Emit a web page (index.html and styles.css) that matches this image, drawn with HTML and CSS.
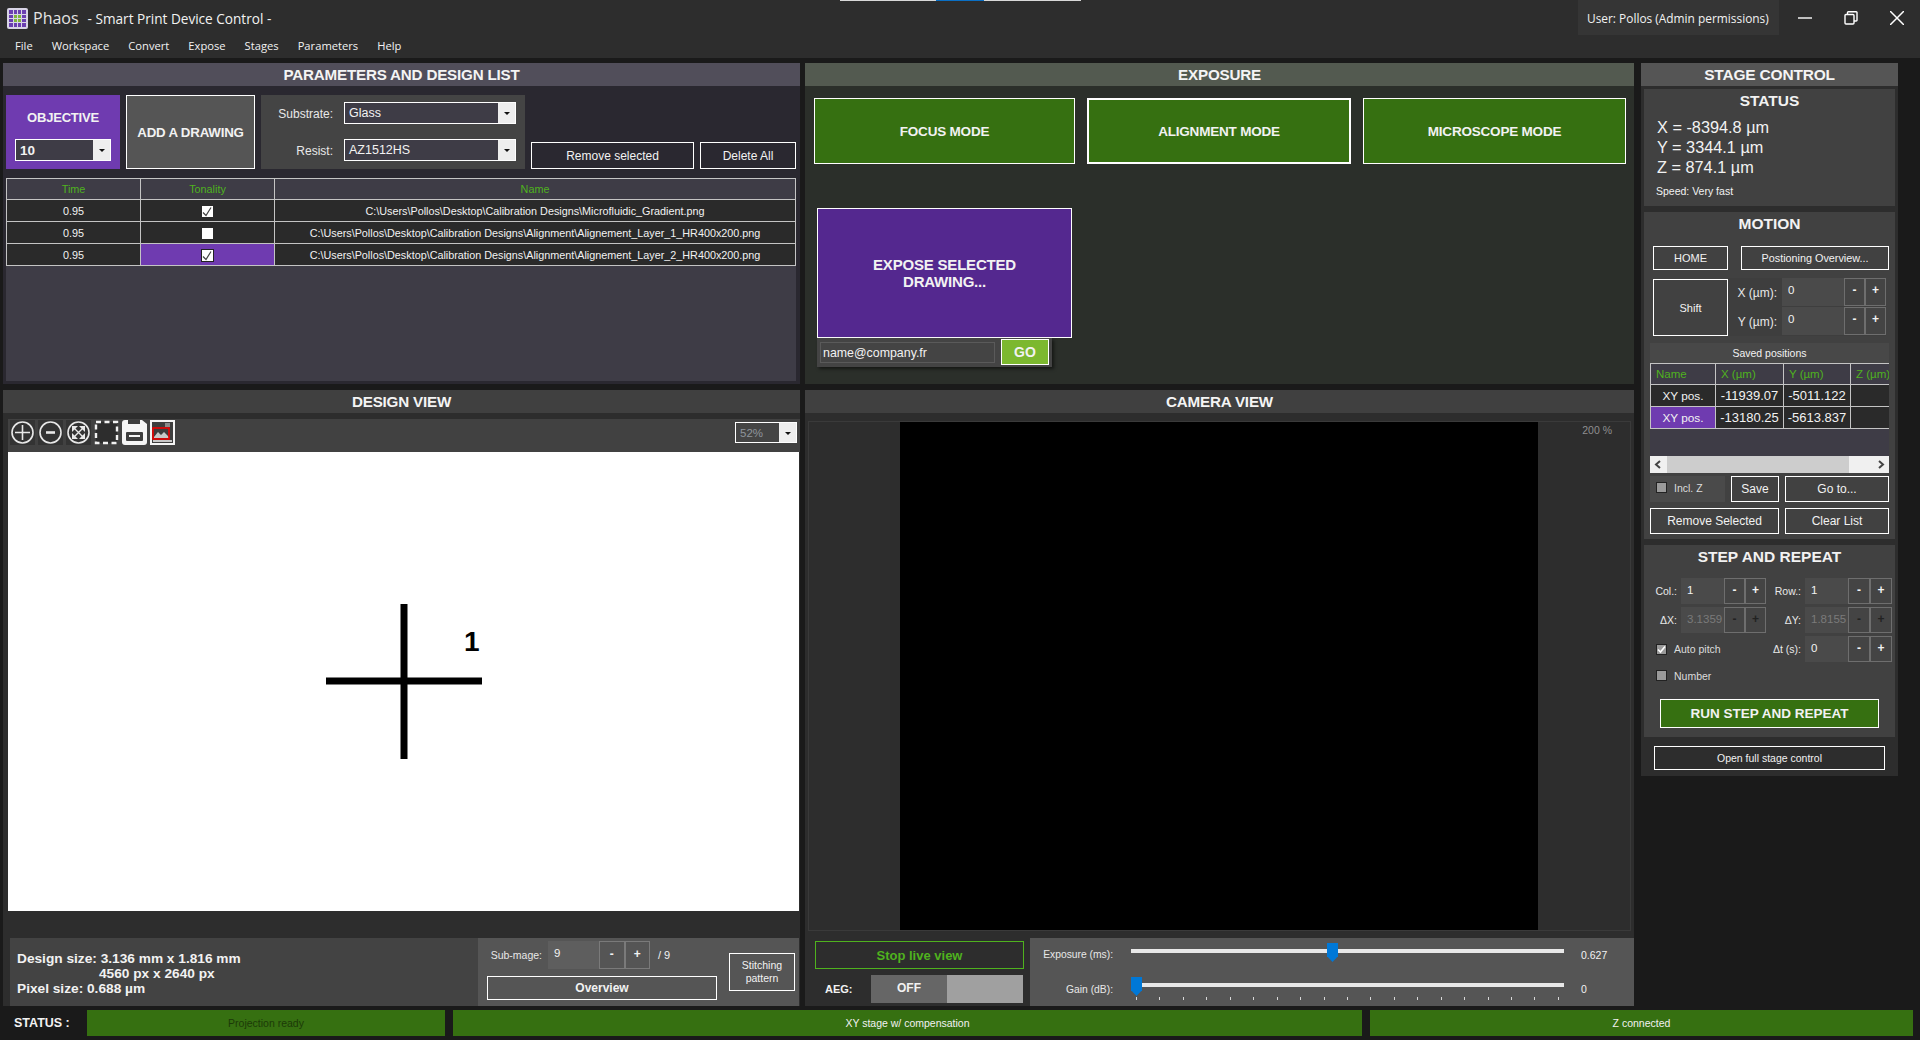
FILE: index.html
```html
<!DOCTYPE html>
<html lang="en">
<head>
    <meta charset="UTF-8">
    <title>Phaos - Smart Print Device Control</title>
    <link rel="stylesheet" href="styles.css">
</head>
<body>

<header class="titlebar">
    <div class="snap-hint"><span class="snap-hint-on"></span></div>
    <div class="title-left">
        <div class="title-row">
            <svg class="logo" width="21" height="21" viewBox="0 0 21 21">
                <rect width="21" height="21" rx="2" fill="#d8d4e6"/>
                <g fill="#6a3fb0">
                    <rect x="2" y="2" width="4" height="4"/><rect x="7" y="2" width="3" height="4"/><rect x="11" y="2" width="3" height="4"/><rect x="15" y="2" width="4" height="4"/>
                    <rect x="2" y="7" width="4" height="3"/><rect x="15" y="7" width="4" height="3"/>
                    <rect x="2" y="11" width="4" height="3"/><rect x="15" y="11" width="4" height="3"/>
                    <rect x="2" y="15" width="4" height="4"/><rect x="7" y="15" width="3" height="4"/><rect x="11" y="15" width="3" height="4"/><rect x="15" y="15" width="4" height="4"/>
                </g>
                <g fill="#7fb53a">
                    <rect x="7" y="7" width="3" height="3"/><rect x="11" y="7" width="3" height="3"/><rect x="7" y="11" width="3" height="3"/><rect x="11" y="11" width="3" height="3"/>
                </g>
            </svg>
            <span class="app-name">Phaos</span>
            <span class="app-sub">- Smart Print Device Control -</span>
        </div>
        <nav class="menu">
            <span>File</span><span>Workspace</span><span>Convert</span><span>Expose</span><span>Stages</span><span>Parameters</span><span>Help</span>
        </nav>
    </div>
    <div class="user-badge">User: Pollos (Admin permissions)</div>
    <div class="win-btns">
        <svg width="14" height="14" viewBox="0 0 14 14"><path d="M0 7h14" stroke="#fff" stroke-width="1.4"/></svg>
        <svg width="14" height="14" viewBox="0 0 14 14" fill="none" stroke="#fff" stroke-width="1.4"><rect x="1" y="3.5" width="9" height="9.5" rx="1"/><path d="M3.5 3.5V1.5a.8.8 0 0 1 .8-.8h7.9a.8.8 0 0 1 .8.8v7.7a.8.8 0 0 1-.8.8H10"/></svg>
        <svg width="14" height="14" viewBox="0 0 14 14"><path d="M0 0l14 14M14 0L0 14" stroke="#fff" stroke-width="1.5"/></svg>
    </div>
</header>

<main class="workspace">

    <section class="panel params">
        <h2 class="panel-head params-head">PARAMETERS AND DESIGN LIST</h2>
        <div class="params-top">
            <div class="objective">
                <span class="objective-label">OBJECTIVE</span>
                <div class="combo objective-combo"><span class="combo-text strong">10</span><span class="combo-arrow"></span></div>
            </div>
            <button class="btn add-drawing">ADD A DRAWING</button>
            <div class="substrate">
                <div class="substrate-row">
                    <label>Substrate:</label>
                    <div class="combo"><span class="combo-text">Glass</span><span class="combo-arrow"></span></div>
                </div>
                <div class="substrate-row">
                    <label>Resist:</label>
                    <div class="combo"><span class="combo-text">AZ1512HS</span><span class="combo-arrow"></span></div>
                </div>
            </div>
            <button class="btn remove-selected">Remove selected</button>
            <button class="btn delete-all">Delete All</button>
        </div>
        <div class="list-area">
            <table class="grid design-list">
                <colgroup><col class="c-time"><col class="c-tone"><col></colgroup>
                <thead><tr><th>Time</th><th>Tonality</th><th>Name</th></tr></thead>
                <tbody>
                    <tr>
                        <td>0.95</td>
                        <td><span class="tick on"><svg width="12" height="12" viewBox="0 0 12 12"><path d="M2 6.5l3 3 5-8" fill="none" stroke="#444" stroke-width="1.2"/></svg></span></td>
                        <td>C:\Users\Pollos\Desktop\Calibration Designs\Microfluidic_Gradient.png</td>
                    </tr>
                    <tr>
                        <td>0.95</td>
                        <td><span class="tick"></span></td>
                        <td>C:\Users\Pollos\Desktop\Calibration Designs\Alignment\Alignement_Layer_1_HR400x200.png</td>
                    </tr>
                    <tr>
                        <td>0.95</td>
                        <td class="picked"><span class="tick on edged"><svg width="12" height="12" viewBox="0 0 12 12"><path d="M2 6.5l3 3 5-8" fill="none" stroke="#444" stroke-width="1.2"/></svg></span></td>
                        <td>C:\Users\Pollos\Desktop\Calibration Designs\Alignment\Alignement_Layer_2_HR400x200.png</td>
                    </tr>
                </tbody>
            </table>
        </div>
    </section>

    <section class="panel exposure">
        <h2 class="panel-head exposure-head">EXPOSURE</h2>
        <div class="modes">
            <button class="btn mode mode-focus">FOCUS MODE</button>
            <button class="btn mode mode-align">ALIGNMENT MODE</button>
            <button class="btn mode mode-micro">MICROSCOPE MODE</button>
        </div>
        <button class="btn expose-btn">EXPOSE SELECTED<br>DRAWING...</button>
        <div class="mail-strip">
            <span class="mail-input">name@company.fr</span>
            <button class="btn go-btn">GO</button>
        </div>
    </section>

    <aside class="panel stage">
        <h2 class="panel-head stage-head">STAGE CONTROL</h2>

        <div class="sub status-sub">
            <h3 class="sub-title">STATUS</h3>
            <div class="coords">
                <div>X = -8394.8 µm</div>
                <div>Y = 3344.1 µm</div>
                <div>Z = 874.1 µm</div>
            </div>
            <div class="speed">Speed: Very fast</div>
        </div>

        <div class="sub motion-sub">
            <h3 class="sub-title">MOTION</h3>
            <div class="motion-row">
                <button class="btn home-btn">HOME</button>
                <button class="btn overview-btn">Postioning Overview...</button>
            </div>
            <div class="shift-row">
                <button class="btn shift-btn">Shift</button>
                <div class="shift-fields">
                    <div class="shift-line">
                        <label>X (µm):</label>
                        <div class="stepper wide"><span class="stepper-val">0</span><span class="step">-</span><span class="step">+</span></div>
                    </div>
                    <div class="shift-line">
                        <label>Y (µm):</label>
                        <div class="stepper wide"><span class="stepper-val">0</span><span class="step">-</span><span class="step">+</span></div>
                    </div>
                </div>
            </div>
            <div class="saved">
                <div class="saved-title">Saved positions</div>
                <div class="saved-list">
                    <table class="grid saved-table">
                        <colgroup><col class="s-name"><col class="s-x"><col class="s-y"><col class="s-z"></colgroup>
                        <thead><tr><th class="left">Name</th><th class="left">X (µm)</th><th class="left">Y (µm)</th><th class="left">Z (µm)</th></tr></thead>
                        <tbody>
                            <tr><td class="pos-name">XY pos.</td><td>-11939.07</td><td>-5011.122</td><td></td></tr>
                            <tr><td class="pos-name picked">XY pos.</td><td>-13180.25</td><td>-5613.837</td><td></td></tr>
                        </tbody>
                    </table>
                </div>
                <div class="hscroll">
                    <svg width="17" height="17" viewBox="0 0 17 17"><path d="M10 5l-4 3.5 4 3.5" fill="none" stroke="#444" stroke-width="2"/></svg>
                    <span class="hscroll-track"><span class="hscroll-thumb"></span></span>
                    <svg width="17" height="17" viewBox="0 0 17 17"><path d="M7 5l4 3.5-4 3.5" fill="none" stroke="#444" stroke-width="2"/></svg>
                </div>
                <div class="saved-actions">
                    <div class="incl-z"><span class="check"></span><span>Incl. Z</span></div>
                    <button class="btn save-btn">Save</button>
                    <button class="btn goto-btn">Go to...</button>
                </div>
                <div class="saved-actions second">
                    <button class="btn remove-sel-btn">Remove Selected</button>
                    <button class="btn goto-btn">Clear List</button>
                </div>
            </div>
        </div>

        <div class="sub repeat-sub">
            <h3 class="sub-title">STEP AND REPEAT</h3>
            <div class="repeat-grid">
                <label>Col.:</label>
                <div class="stepper"><span class="stepper-val">1</span><span class="step">-</span><span class="step">+</span></div>
                <label>Row.:</label>
                <div class="stepper big"><span class="stepper-val">1</span><span class="step">-</span><span class="step">+</span></div>

                <label>ΔX:</label>
                <div class="stepper off"><span class="stepper-val">3.1359</span><span class="step">-</span><span class="step">+</span></div>
                <label>ΔY:</label>
                <div class="stepper big off"><span class="stepper-val">1.8155</span><span class="step">-</span><span class="step">+</span></div>

                <div class="check-cell"><span class="check checked"><svg width="9" height="9" viewBox="0 0 9 9"><path d="M1 4.500l2.500 2.500L8 1.500" fill="none" stroke="#fff" stroke-width="1.6"/></svg></span><span>Auto pitch</span></div>
                <label>Δt (s):</label>
                <div class="stepper big"><span class="stepper-val">0</span><span class="step">-</span><span class="step">+</span></div>

                <div class="check-cell number-cell"><span class="check"></span><span>Number</span></div>
            </div>
            <button class="btn run-btn">RUN STEP AND REPEAT</button>
        </div>

        <button class="btn full-stage">Open full stage control</button>
    </aside>

    <section class="panel design">
        <h2 class="panel-head">DESIGN VIEW</h2>
        <div class="toolbar">
            <svg class="tool" width="25" height="25" viewBox="0 0 25 25"><rect width="25" height="25" fill="#333"/><g fill="none" stroke="#e8e8e8" stroke-width="1.600"><circle cx="12.500" cy="12.500" r="10.500"/><path d="M12.500 5v15M5 12.500h15"/></g></svg>
            <svg class="tool" width="25" height="25" viewBox="0 0 25 25"><rect width="25" height="25" fill="#333"/><g fill="none" stroke="#e8e8e8"><circle cx="12.500" cy="12.500" r="10.500" stroke-width="1.600"/><path d="M8 12.500h9" stroke-width="2.600"/></g></svg>
            <svg class="tool" width="25" height="25" viewBox="0 0 25 25"><rect width="25" height="25" fill="#333"/><circle cx="12.500" cy="12.500" r="10.500" fill="none" stroke="#e8e8e8" stroke-width="1.600"/><g fill="#e8e8e8"><path d="M6 6h6l-6 6z"/><path d="M19 6v6l-6-6z"/><path d="M19 19h-6l6-6z"/><path d="M6 19v-6l6 6z"/></g><path d="M8 8l9 9M17 8l-9 9" stroke="#e8e8e8" stroke-width="1.400"/></svg>
            <svg class="tool" width="25" height="25" viewBox="0 0 25 25"><rect x="2" y="2" width="21" height="21" fill="#2d2d2d" stroke="#f2f2f2" stroke-width="2.400" stroke-dasharray="5 3.500"/></svg>
            <svg class="tool" width="25" height="25" viewBox="0 0 25 25"><path d="M0 3a3 3 0 0 1 3-3h17l5 4v18a3 3 0 0 1-3 3H3a3 3 0 0 1-3-3z" fill="#f5f5f5"/><rect x="6" y="0" width="12" height="4" fill="#3d3d3d"/><rect x="4" y="12" width="17" height="9" rx="1" fill="#3d3d3d"/><rect x="7" y="15" width="11" height="2" fill="#f5f5f5"/></svg>
            <svg class="tool" width="25" height="25" viewBox="0 0 25 25"><rect width="25" height="25" fill="#f5f5f5"/><rect x="2" y="2" width="21" height="21" fill="#3e3e3e"/><path d="M4 17l4-5 3 3 3-3 5 5v1H4z" fill="#c8c8c8"/><path d="M3 21h19" stroke="#c8c8c8" stroke-width="2"/><path d="M15 3h5v4h-5z" fill="#8a8a8a"/><rect x="3" y="8" width="16" height="11" fill="none" stroke="#f00000" stroke-width="1.600"/></svg>
            <div class="combo zoom-combo"><span class="combo-text dim">52%</span><span class="combo-arrow"></span></div>
        </div>
        <div class="canvas">
            <svg width="791" height="459" viewBox="0 0 791 459">
                <path d="M396 152v155M318 229h156" stroke="#000" stroke-width="7" fill="none"/>
                <text class="canvas-num" x="456" y="199">1</text>
            </svg>
        </div>
        <div class="design-foot">
            <div class="size-info">
                <div>Design size: 3.136 mm x 1.816 mm</div>
                <div class="size-indent">4560 px x 2640 px</div>
                <div>Pixel size: 0.688 µm</div>
            </div>
            <div class="subimage">
                <div class="subimage-main">
                    <div class="subimage-row">
                        <label>Sub-mage:</label>
                        <div class="stepper sub-step"><span class="stepper-val">9</span><span class="step">-</span><span class="step">+</span></div>
                        <span class="of-total">/ 9</span>
                    </div>
                    <button class="btn overview">Overview</button>
                </div>
                <button class="btn stitching">Stitching pattern</button>
            </div>
        </div>
    </section>

    <section class="panel camera">
        <h2 class="panel-head">CAMERA VIEW</h2>
        <div class="camera-frame">
            <div class="camera-black"></div>
            <div class="camera-zoom">200 %</div>
        </div>
        <div class="camera-foot">
            <div class="live-col">
                <button class="btn stop-live">Stop live view</button>
                <div class="aeg-row">
                    <span class="aeg-label">AEG:</span>
                    <div class="toggle"><span class="toggle-off">OFF</span><span class="toggle-rest"></span></div>
                </div>
            </div>
            <div class="sliders">
                <div class="slider-row">
                    <label>Exposure (ms):</label>
                    <div class="slider">
                        <div class="track"><span class="thumb" style="left: 196px"></span></div>
                    </div>
                    <span class="slider-val">0.627</span>
                </div>
                <div class="slider-row gain-row">
                    <label>Gain (dB):</label>
                    <div class="slider">
                        <div class="track"><span class="thumb" style="left: 0"></span></div>
                        <div class="ticks">
                            <i></i><i></i><i></i><i></i><i></i><i></i><i></i><i></i><i></i><i></i><i></i><i></i><i></i><i></i><i></i><i></i><i></i><i></i><i></i>
                        </div>
                    </div>
                    <span class="slider-val">0</span>
                </div>
            </div>
        </div>
    </section>
</main>

<footer class="statusbar">
    <span class="status-label">STATUS :</span>
    <div class="status-cell cell-proj">Projection ready</div>
    <div class="status-cell cell-xy">XY stage w/ compensation</div>
    <div class="status-cell cell-z">Z connected</div>
</footer>

</body>
</html>
```

FILE: styles.css
```css
* {
    box-sizing: border-box;
}

html, body {
    margin: 0;
    height: 1040px;
    overflow: hidden;
}

body {
    background-color: #1a1a1a;
    color: #f2f2f2;
    font-family: "Liberation Sans", Arial, sans-serif;
    font-size: 11px;
}

h2, h3 {
    margin: 0;
}

label {
    color: #e8e8e8;
}

.btn {
    display: block;
    padding: 0;
    background: transparent;
    border: 1px solid #fff;
    color: #f2f2f2;
    font-family: inherit;
    font-size: 11px;
}

/* title bar */
.titlebar {
    position: relative;
    display: flex;
    height: 58px;
    background-color: #2d2d2d;
}

.snap-hint {
    position: absolute;
    top: 0;
    left: 840px;
    width: 241px;
    height: 1px;
    background-color: #d8d8d8;
}

.snap-hint-on {
    position: absolute;
    left: 96px;
    width: 48px;
    height: 1px;
    background-color: #0a6fc4;
}

.title-left {
    width: 1578px;
    padding-left: 7px;
}

.title-row {
    display: flex;
    align-items: center;
    height: 36px;
    font-family: "Open Sans", sans-serif;
}

.app-name {
    margin-left: 5px;
    font-size: 16px;
    color: #e4e4e4;
}

.app-sub {
    margin-left: 9px;
    font-size: 13.600px;
}

.menu {
    display: flex;
    gap: 19px;
    padding-left: 8px;
    font-family: "Open Sans", sans-serif;
    font-size: 11.200px;
    line-height: 20px;
}

.user-badge {
    width: 201px;
    height: 35px;
    padding-left: 9px;
    background-color: #353535;
    font-family: "Open Sans", sans-serif;
    font-size: 11.900px;
    line-height: 36px;
    white-space: nowrap;
}

.win-btns {
    display: flex;
    gap: 32px;
    padding: 11px 0 0 19px;
    height: 35px;
}

/* main grid */
.workspace {
    display: grid;
    grid-template-columns: 797px 829px 257px;
    grid-template-rows: 321px 616px;
    column-gap: 5px;
    row-gap: 6px;
    margin: 5px 0 0 3px;
}

.workspace .stage {
    grid-column: 3;
    grid-row: 1 / 3;
    margin-left: 2px;
    width: 257px;
    height: 713px;
}

.panel {
    background-color: #2d2d2d;
}

.panel-head {
    height: 23px;
    background-color: #404040;
    color: #f4f4f4;
    font-size: 15.200px;
    font-weight: bold;
    letter-spacing: -0.2px;
    line-height: 24px;
    text-align: center;
}

/* parameters */
.params {
    background-color: #2a2830;
}

.params-head {
    background-color: #514e5a;
}

.params-top {
    display: flex;
    align-items: flex-end;
    height: 74px;
    margin: 9px 0 0 3px;
}

.objective {
    width: 114px;
    height: 74px;
    padding: 15px 9px 0;
    background-color: #6f3bb0;
}

.objective-label {
    display: block;
    font-size: 13px;
    font-weight: bold;
    letter-spacing: -0.2px;
    line-height: 16px;
    text-align: center;
}

.combo {
    display: flex;
    width: 172px;
    height: 22px;
    border: 1px solid #fff;
    background-color: #3e3c46;
}

.combo-text {
    flex: 1;
    padding-left: 4px;
    font-size: 12.500px;
    line-height: 21px;
}

.combo-text.strong {
    font-size: 13.500px;
    font-weight: bold;
}

.combo-text.dim {
    color: #8f959c;
    font-size: 11.500px;
}

.combo-arrow {
    position: relative;
    width: 17px;
    background-color: #eeeeee;
}

.combo-arrow::after {
    content: "";
    position: absolute;
    left: 6px;
    top: 9px;
    border: 3px solid transparent;
    border-top: 3px solid #111;
    border-bottom: 0;
}

.objective-combo {
    width: 96px;
    margin-top: 13px;
}

.add-drawing {
    width: 129px;
    height: 74px;
    margin-left: 6px;
    background-color: #555;
    font-size: 13.300px;
    font-weight: bold;
    letter-spacing: -0.2px;
}

.substrate {
    width: 264px;
    height: 74px;
    margin-left: 6px;
    padding-top: 7px;
    background-color: #444;
}

.substrate-row {
    display: flex;
    align-items: center;
    height: 22px;
    margin-bottom: 15px;
}

.substrate-row label {
    width: 72px;
    padding-top: 2px;
    font-size: 12px;
    text-align: right;
}

.substrate-row .combo {
    margin-left: 11px;
}

.remove-selected {
    width: 163px;
    height: 27px;
    margin-left: 6px;
    font-size: 12px;
}

.delete-all {
    width: 96px;
    height: 27px;
    margin-left: 6px;
    font-size: 12px;
}

.list-area {
    height: 203px;
    margin: 9px 4px 0 3px;
    background-color: #3e3c46;
}

.grid {
    border-collapse: collapse;
    table-layout: fixed;
    width: 100%;
    font-size: 10.800px;
}

.grid th, .grid td {
    padding: 0;
    border: 1px solid #c4c4c4;
    overflow: hidden;
    white-space: nowrap;
    text-align: center;
}

.grid th {
    height: 21px;
    background-color: #3e3c46;
    color: #4fb21e;
    font-weight: normal;
}

.grid td {
    height: 22px;
    background-color: #2a2a2a;
}

.grid td.picked {
    background-color: #6f3bb0;
}

.c-time, .c-tone {
    width: 134px;
}

.tick {
    display: inline-block;
    width: 11px;
    height: 11px;
    background-color: #fff;
    vertical-align: middle;
    line-height: 0;
}

.tick svg {
    margin-left: -1px;
}

.tick.edged {
    outline: 1px solid #222;
}

/* exposure */
.exposure {
    background-color: #2b2f2a;
}

.exposure-head {
    background-color: #535a50;
}

.modes {
    display: flex;
    margin: 12px 0 0 9px;
}

.mode {
    height: 66px;
    background-color: #367011;
    font-size: 13.500px;
    font-weight: bold;
    letter-spacing: -0.2px;
}

.mode-focus {
    width: 261px;
}

.mode-align {
    width: 264px;
    margin-left: 12px;
    border-width: 2px;
}

.mode-micro {
    width: 263px;
    margin-left: 12px;
}

.expose-btn {
    width: 255px;
    height: 130px;
    margin: 44px 0 0 12px;
    background-color: #54288f;
    font-size: 15px;
    font-weight: bold;
    letter-spacing: -0.2px;
    line-height: 17px;
}

.mail-strip {
    display: flex;
    width: 235px;
    height: 29px;
    margin-left: 12px;
    padding: 1px 0 0 3px;
    background-color: #444;
    box-shadow: 2px 2px 3px rgba(0, 0, 0, 0.5);
}

.mail-input {
    width: 175px;
    height: 21px;
    margin-top: 3px;
    padding-left: 2px;
    border: 1px solid #5a5a5a;
    font-size: 12.400px;
    line-height: 20px;
}

.go-btn {
    width: 48px;
    height: 26px;
    margin-left: 6px;
    background-color: #7cb82f;
    font-size: 14px;
    font-weight: bold;
}

/* stage control */
.stage-head {
    background-color: #555;
    margin-bottom: 3px;
    font-size: 15.500px;
}

.sub {
    margin: 0 3px 6px;
    background-color: #414141;
}

.sub-title {
    font-size: 15.500px;
    font-weight: bold;
    line-height: 24px;
    text-align: center;
}

.status-sub {
    height: 117px;
}

.coords {
    margin: 4px 0 0 13px;
    font-size: 16.300px;
    line-height: 20px;
}

.speed {
    margin: 6px 0 0 12px;
    font-size: 10.500px;
    line-height: 16px;
}

.motion-sub {
    height: 327px;
}

.motion-row {
    display: flex;
    margin: 10px 0 0 9px;
}

.home-btn {
    width: 75px;
    height: 24px;
}

.overview-btn {
    width: 148px;
    height: 24px;
    margin-left: 13px;
    font-size: 10.800px;
}

.shift-row {
    display: flex;
    margin: 8px 0 0 9px;
}

.shift-btn {
    width: 75px;
    height: 57px;
    margin-top: 1px;
}

.shift-fields {
    width: 158px;
    background-color: #3e3e3e;
}

.shift-line {
    display: flex;
    height: 29px;
}

.shift-line label {
    width: 54px;
    padding-right: 5px;
    font-size: 12px;
    line-height: 31px;
    text-align: right;
    white-space: nowrap;
}

.stepper {
    display: flex;
    width: 85px;
    height: 26px;
}

.stepper.big {
    width: 87px;
}

.stepper.wide {
    width: 104px;
    height: 28px;
}

.stepper-val {
    flex: 1;
    min-width: 0;
    padding-left: 6px;
    overflow: hidden;
    background-color: #4a4a4a;
    font-size: 11.500px;
    line-height: 24px;
    white-space: nowrap;
}

.step {
    width: 21px;
    border: 1px solid #6e6e6e;
    margin-left: 0;
    background-color: #444;
    font-size: 12px;
    font-weight: bold;
    line-height: 22px;
    text-align: center;
}

.stepper.big .step {
    width: 22px;
}

.stepper.off .stepper-val,
.stepper.off .step {
    color: #7a7a7a;
}

.stepper.off .step {
    color: #222;
}

.saved {
    margin: 7px 6px 0;
}

.saved-title {
    height: 20px;
    background-color: #484848;
    font-size: 10.500px;
    line-height: 21px;
    text-align: center;
}

.saved-list {
    height: 93px;
    overflow: hidden;
    background-color: #3e3c46;
}

.saved-table {
    width: 260px;
    font-size: 13px;
}

.grid td.pos-name {
    font-size: 11.800px;
}

.s-name {
    width: 65px;
}

.s-x {
    width: 68px;
}

.s-y {
    width: 67px;
}

.s-z {
    width: 60px;
}

.grid th.left {
    padding-left: 5px;
    text-align: left;
    font-size: 11.500px;
}

.hscroll {
    display: flex;
    height: 17px;
    background-color: #f0f0f0;
}

.hscroll-track {
    flex: 1;
}

.hscroll-thumb {
    display: block;
    width: 182px;
    height: 17px;
    background-color: #cdcdcd;
}

.saved-actions {
    display: flex;
    margin-top: 3px;
}

.saved-actions.second {
    margin-top: 6px;
}

.saved-actions .btn {
    font-size: 12px;
}

.incl-z {
    display: flex;
    align-items: center;
    width: 75px;
    height: 26px;
    padding: 0 0 3px 6px;
    background-color: #4a4a4a;
    gap: 7px;
    color: #dcdcdc;
    font-size: 10.500px;
}

.check {
    display: block;
    flex: none;
    width: 11px;
    height: 11px;
    border: 1px solid #222;
    background-color: #9a9a9a;
    line-height: 0;
}

.save-btn {
    width: 48px;
    height: 26px;
    margin-left: 6px;
}

.goto-btn {
    width: 104px;
    height: 26px;
    margin-left: 6px;
}

.remove-sel-btn {
    width: 129px;
    height: 26px;
}

.repeat-sub {
    height: 192px;
}

.repeat-grid {
    display: grid;
    grid-template-columns: 37px 85px 39px 87px;
    grid-auto-rows: 26px;
    row-gap: 3px;
    margin-top: 9px;
}

.repeat-grid > label {
    padding-right: 4px;
    line-height: 27px;
    text-align: right;
    white-space: nowrap;
    font-size: 10.5px;
}

.check-cell {
    grid-column: 1 / 3;
    display: flex;
    align-items: center;
    gap: 7px;
    padding-left: 12px;
    color: #dcdcdc;
    font-size: 10.5px;
}

.number-cell {
    grid-column: 1 / 3;
    margin-top: -5px;
}

.check.checked {
    padding: 0;
}

.run-btn {
    width: 219px;
    height: 29px;
    margin: 8px 0 0 16px;
    background-color: #367011;
    font-size: 13.500px;
    font-weight: bold;
}

.full-stage {
    width: 231px;
    height: 24px;
    margin: 9px 0 0 13px;
    font-size: 10.500px;
}

/* design view */
.toolbar {
    display: flex;
    align-items: flex-start;
    gap: 3px;
    height: 33px;
    margin: 6px 0 0 5px;
    padding: 1px 0 0 2px;
    background-color: #414141;
}

.tool {
    flex: none;
}

.zoom-combo {
    width: 62px;
    height: 21px;
    margin: 2px 0 0 557px;
    background-color: #444;
}

.canvas {
    width: 791px;
    height: 459px;
    margin-left: 5px;
    background-color: #fff;
    line-height: 0;
}

.canvas-num {
    font-size: 28px;
    font-weight: bold;
    fill: #000;
}

.design-foot {
    display: flex;
    height: 68px;
    margin: 27px 0 0 7px;
    font-weight: bold;
}

.size-info {
    width: 468px;
    padding: 13px 0 0 7px;
    background-color: #434343;
    font-size: 13.700px;
    line-height: 15px;
}

.size-indent {
    margin-left: 82px;
}

.subimage {
    display: flex;
    width: 321px;
    padding-left: 9px;
    background-color: #555;
    font-weight: normal;
}

.subimage-row {
    display: flex;
    height: 28px;
    margin-top: 3px;
}

.subimage-row label {
    width: 61px;
    padding-right: 6px;
    font-size: 10.5px;
    line-height: 29px;
    text-align: right;
}

.sub-step {
    width: 102px;
    height: 28px;
}

.sub-step .stepper-val {
    background-color: #5e5e5e;
}

.sub-step .step {
    width: 25.500px;
    border-color: #7a7a7a;
    background-color: #555;
    line-height: 25px;
}

.of-total {
    margin-left: 8px;
    line-height: 28px;
}

.overview {
    width: 230px;
    height: 24px;
    margin-top: 7px;
    font-size: 12px;
    font-weight: bold;
}

.stitching {
    width: 66px;
    height: 38px;
    margin: 15px 0 0 12px;
    font-size: 10.500px;
    line-height: 13px;
}

/* camera */
.camera-frame {
    display: flex;
    width: 823px;
    height: 510px;
    margin: 8px 0 0 3px;
    border: 1px solid #3a3a3a;
}

.camera-black {
    width: 638px;
    margin-left: 91px;
    background-color: #000;
}

.camera-zoom {
    flex: 1;
    padding: 2px 18px 0 0;
    color: #8f8f8f;
    font-size: 10.500px;
    text-align: right;
}

.camera-foot {
    display: flex;
    height: 68px;
    margin-top: 7px;
}

.live-col {
    width: 225px;
    padding: 3px 0 0 10px;
}

.stop-live {
    width: 209px;
    height: 28px;
    border-color: #4fb21e;
    color: #4fb21e;
    font-size: 13px;
    font-weight: bold;
}

.aeg-row {
    display: flex;
    align-items: center;
    margin-top: 6px;
}

.aeg-label {
    width: 56px;
    padding-left: 10px;
    font-weight: bold;
}

.toggle {
    display: flex;
    width: 152px;
    height: 28px;
}

.toggle-off {
    width: 76px;
    background-color: #666;
    font-size: 12px;
    font-weight: bold;
    line-height: 26px;
    text-align: center;
}

.toggle-rest {
    flex: 1;
    background-color: #a0a0a0;
}

.sliders {
    width: 604px;
    padding-top: 5px;
    background-color: #555;
}

.slider-row {
    display: flex;
    height: 34px;
}

.gain-row {
    height: 29px;
}

.slider-row label {
    width: 83px;
    font-size: 10.300px;
    line-height: 24px;
    text-align: right;
    white-space: nowrap;
}

.gain-row label {
    line-height: 26px;
}

.slider {
    width: 433px;
    margin-left: 18px;
}

.track {
    position: relative;
    height: 4px;
    margin-top: 6px;
    background-color: #e8e8e8;
}

.thumb {
    position: absolute;
    top: -6px;
    width: 11px;
    height: 19px;
    background-color: #0078d7;
    clip-path: polygon(0 0, 100% 0, 100% 70%, 50% 100%, 0 70%);
}

.ticks {
    display: flex;
    justify-content: space-between;
    margin-top: 10px;
    padding: 0 5px;
}

.ticks i {
    display: block;
    width: 1px;
    height: 3px;
    background-color: #d8d8d8;
}

.slider-val {
    margin-left: 17px;
    font-size: 10.500px;
    line-height: 24px;
}

/* status bar */
.statusbar {
    display: flex;
    align-items: stretch;
    height: 26px;
    margin-top: 4px;
}

.status-label {
    width: 87px;
    padding-left: 14px;
    font-size: 12.500px;
    font-weight: bold;
    line-height: 26px;
}

.status-cell {
    background-color: #367011;
    font-size: 10.500px;
    line-height: 26px;
    text-align: center;
}

.cell-proj {
    width: 358px;
    color: #1c3a08;
}

.cell-xy {
    width: 909px;
    margin-left: 8px;
}

.cell-z {
    width: 543px;
    margin-left: 8px;
}
```
